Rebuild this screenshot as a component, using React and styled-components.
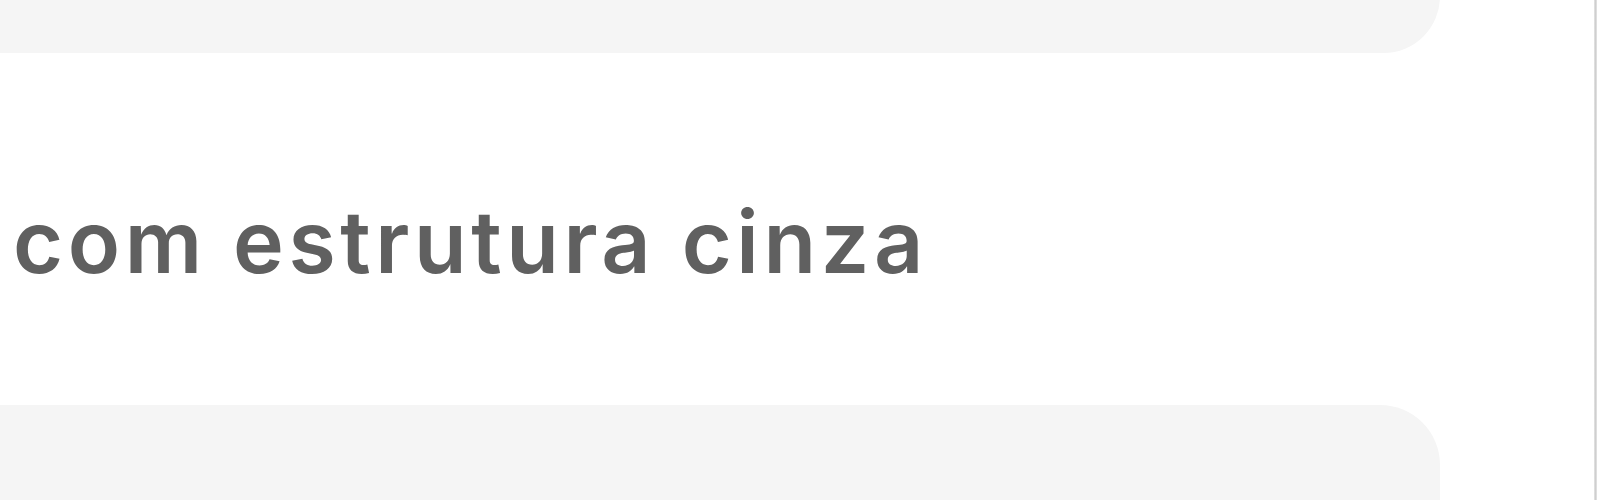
import React from "react";
import styled, { createGlobalStyle } from "styled-components";

const Global = createGlobalStyle`
  html, body {
    margin: 0;
    padding: 0;
    background: #ffffff;
    overflow: hidden;
  }
  body {
    font-family: Inter, "Noto Sans", sans-serif;
  }
`;

const Frame = styled.div`
  display: flex;
  width: 1605px;
  height: 500px;
  overflow: hidden;
  background: #ffffff;
`;

const Content = styled.main`
  display: flex;
  flex-direction: column;
  width: 1594px;
  flex-shrink: 0;
  padding-right: 154px;
  box-sizing: border-box;
`;

const Panel = styled.div`
  background: #f5f5f5;
  border-radius: 0 60px 60px 0;
  height: ${(p) => p.$height}px;
  margin-top: ${(p) => p.$offset || 0}px;
  flex-shrink: 0;
`;

const Heading = styled.h2`
  margin: 146px 0 120px;
  padding-left: 13px;
  font-family: Inter, "Noto Sans", sans-serif;
  font-size: 86px;
  line-height: 86px;
  font-weight: 600;
  letter-spacing: 4.6px;
  color: #606060;
  white-space: nowrap;
`;

const ScrollRail = styled.div`
  width: 3px;
  flex-shrink: 0;
  background: linear-gradient(to right, #e6e6e6, #cfcfcf 50%, #e6e6e6);
`;

export default function App() {
  return (
    <>
      <Global />
      <Frame>
        <Content>
          <Panel $height={113} $offset={-60} />
          <Heading>com estrutura cinza</Heading>
          <Panel $height={200} />
        </Content>
        <ScrollRail />
      </Frame>
    </>
  );
}
